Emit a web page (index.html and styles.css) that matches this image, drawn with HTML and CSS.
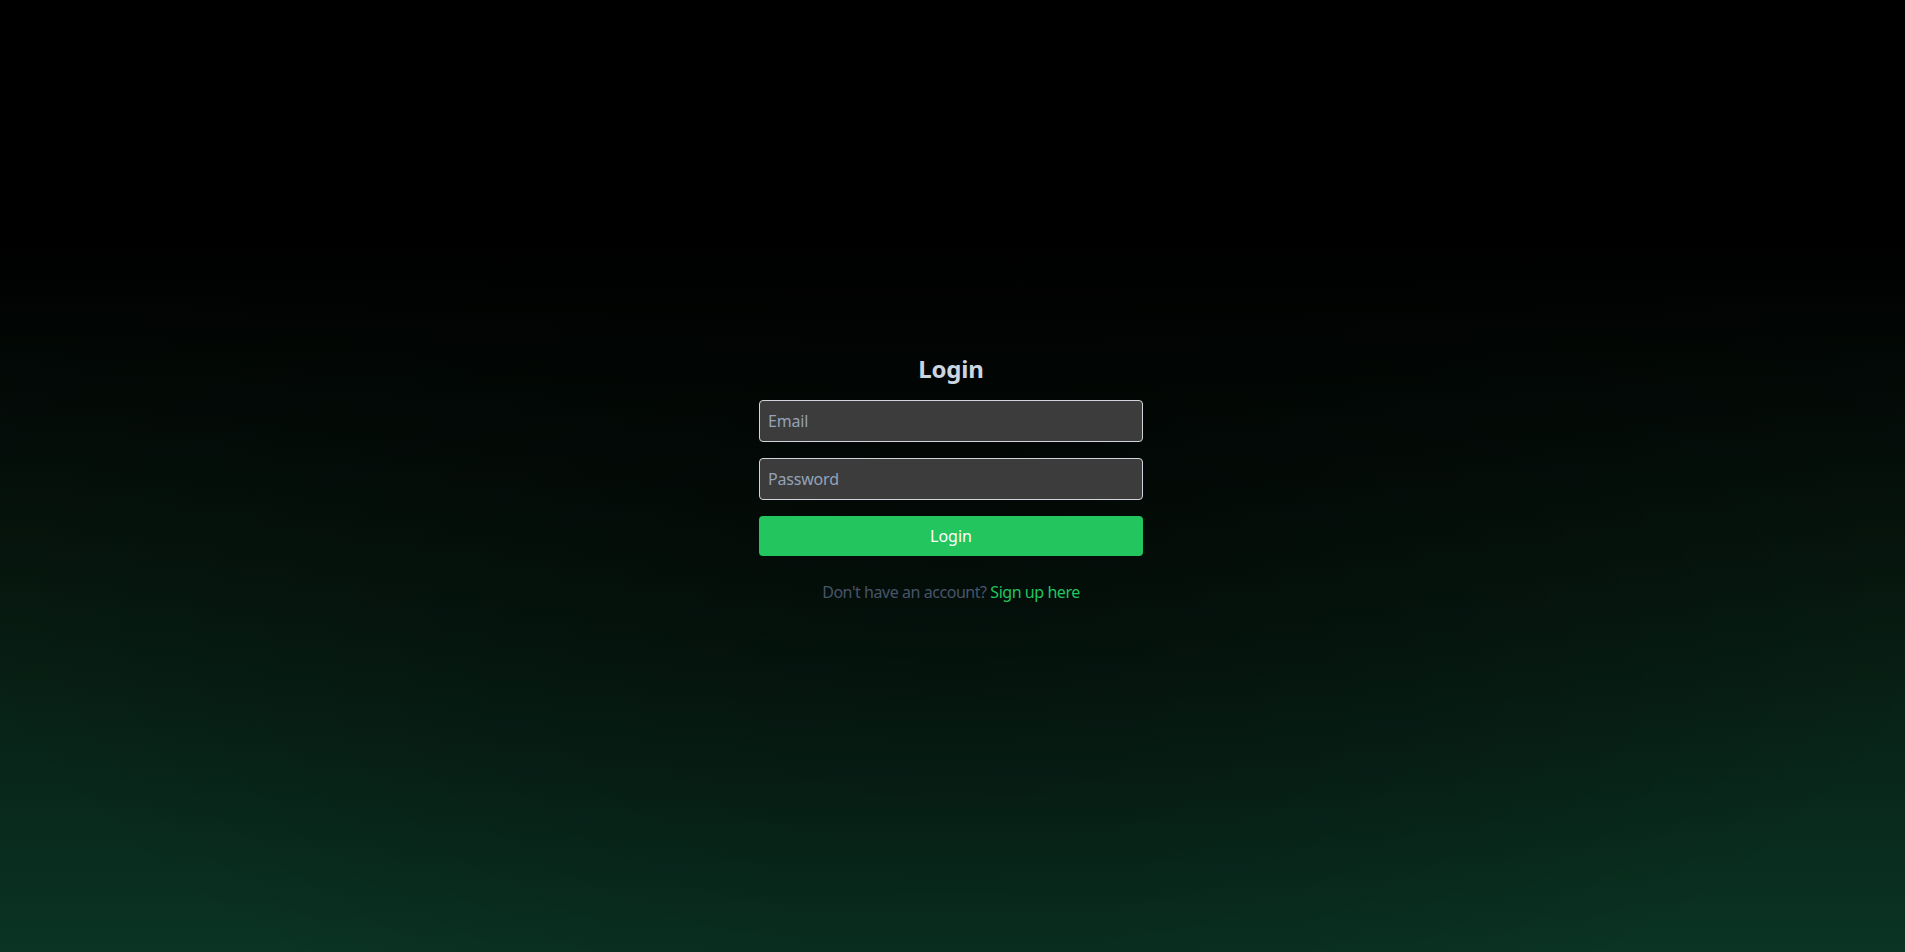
FILE: index.html
```html
<!DOCTYPE html>
<html lang="en">
<head>
<meta charset="utf-8">
<title>Login</title>
<link rel="stylesheet" href="styles.css">
</head>
<body>
<main class="page">
  <form class="login-form">
    <h1 class="title">Login</h1>
    <input class="field" type="email" placeholder="Email">
    <input class="field" type="password" placeholder="Password">
    <button class="submit" type="button">Login</button>
    <p class="signup">Don't have an account? <a class="signup-link" href="#">Sign up here</a></p>
  </form>
</main>
</body>
</html>
```

FILE: styles.css
```css
* { box-sizing: border-box; }
html, body { margin: 0; height: 100%; }
body {
  font-family: "Noto Sans", "Open Sans", sans-serif;
  letter-spacing: -0.2px;
  background:
    radial-gradient(ellipse 55% 65% at 50% 50%, rgba(0,0,0,0.55), rgba(0,0,0,0) 100%),
    linear-gradient(to bottom, #000 0%, #000 26%, #06160e 58%, #0a3424 100%);
  background-color: #000;
}
.page {
  min-height: 100vh;
  display: flex;
  align-items: center;
  justify-content: center;
  padding-top: 4px;
  padding-right: 3px;
}
.login-form {
  width: 384px;
  display: flex;
  flex-direction: column;
  gap: 16px;
}
.title {
  margin: 0 0 -1px;
  text-align: center;
  font-size: 24px;
  line-height: 32px;
  font-weight: 700;
  color: #cbd5e1;
}
.field {
  display: block;
  width: 100%;
  height: 42px;
  padding: 8px;
  font: inherit;
  font-size: 16px;
  line-height: 24px;
  letter-spacing: -0.2px;
  color: #e5e7eb;
  background: #3c3c3c;
  border: 1px solid #d1d5db;
  border-radius: 4px;
  outline: none;
}
.field::placeholder { color: #94a3b8; opacity: 1; }
.submit {
  height: 40px;
  font: inherit;
  font-size: 16px;
  color: #fff;
  background: #22c55e;
  border: none;
  border-radius: 4px;
  cursor: pointer;
}
.signup {
  margin: 8px 0 0;
  text-align: center;
  font-size: 16px;
  line-height: 24px;
  letter-spacing: -0.45px;
  color: #475569;
}
.signup-link { color: #22c55e; text-decoration: none; }
```
